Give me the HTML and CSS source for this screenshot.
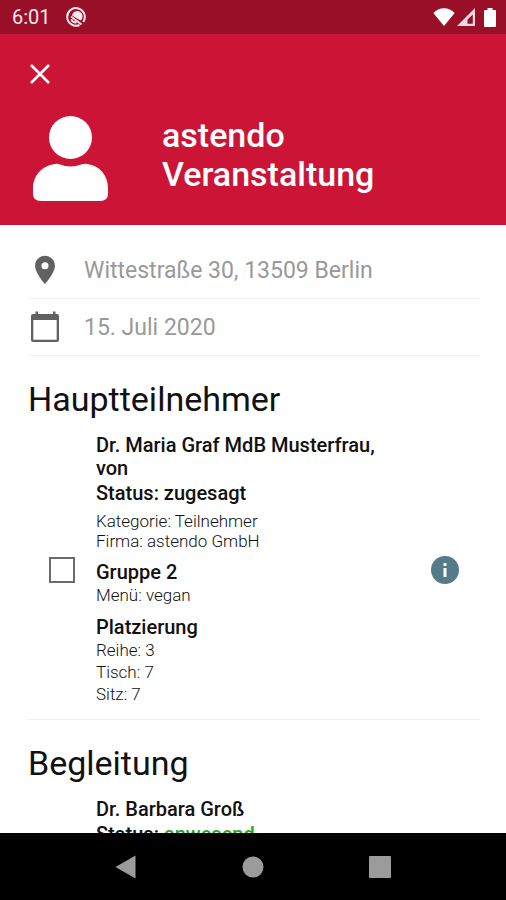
FILE: index.html
```html
<!DOCTYPE html>
<html lang="de">

<head>
    <meta charset="UTF-8">
    <meta name="viewport" content="width=device-width, initial-scale=1.0">
    <title>astendo Veranstaltung</title>
    <link rel="stylesheet" href="styles.css">
</head>

<body>
    <div class="status-bar">
        <span class="time">6:01</span>
        <svg class="status-app" width="20" height="20" viewBox="0 0 20 20" fill="none" stroke="currentColor">
            <path d="M13.500 18A8.800 8.800 0 1 1 17.200 15" stroke-width="2" />
            <path d="M6 8.500A5.300 5.300 0 1 1 14.500 13.500Z" fill="currentColor" stroke="none" />
            <path d="M5 9.500L15.500 17.500M5.200 12.300A5.400 5.400 0 0 0 10.500 15.500" stroke-width="1.800" />
        </svg>
        <div class="status-icons">
            <svg width="22" height="18" viewBox="0 0 22 18" fill="currentColor">
                <path d="M11 18L0.300 5C3 2 7 0.300 11 0.300S19 2 21.700 5Z" />
            </svg>
            <svg width="18" height="18" viewBox="0 0 18 18" fill="currentColor">
                <path fill-rule="evenodd" d="M18 0V18H0ZM15.800 6.500L10.500 11.500V15.800H15.800Z" opacity="0.850" />
            </svg>
            <svg class="battery" width="12" height="19" viewBox="0 0 12 19" fill="currentColor">
                <path d="M3.500 0H8.500V2H11Q12 2 12 3V18Q12 19 11 19H1Q0 19 0 18V3Q0 2 1 2H3.500Z" />
            </svg>
        </div>
    </div>

    <header class="header">
        <button class="close" aria-label="Schließen">
            <svg width="20" height="20" viewBox="0 0 20 20" fill="none" stroke="currentColor" stroke-width="2.600">
                <path d="M1 1L19 19M19 1L1 19" />
            </svg>
        </button>
        <div class="event">
            <svg class="avatar" width="76" height="86" viewBox="0 0 76 86" fill="currentColor">
                <circle cx="37.500" cy="21.500" r="21.500" />
                <path d="M22 48Q24 47.500 27 48.500Q37.500 52.500 48 48.500Q51 47.500 54 48C67 49.500 75 60 75 72V78Q75 85 67 85H8Q0 85 0 78V72C0 60 9 49.500 22 48Z" />
            </svg>
            <h1>astendo Veranstaltung</h1>
        </div>
    </header>

    <main class="content">
        <div class="info-row">
            <svg width="34" height="34" viewBox="0 0 24 24" fill="currentColor">
                <path d="M12 2C8.130 2 5 5.130 5 9c0 5.250 7 13 7 13s7-7.750 7-13c0-3.870-3.130-7-7-7zm0 9.500a2.500 2.500 0 0 1 0-5 2.500 2.500 0 0 1 0 5z" />
            </svg>
            <span>Wittestraße 30, 13509 Berlin</span>
        </div>
        <div class="info-row">
            <svg width="34" height="34" viewBox="0 0 34 34" fill="currentColor">
                <path fill-rule="evenodd" d="M7.500 1.500H10V4H25V1.500H27.500V4H29Q31 4 31 6V30Q31 32 29 32H5Q3 32 3 30V6Q3 4 5 4H7.500ZM5.300 10V29.700H28.700V10Z" />
            </svg>
            <span>15. Juli 2020</span>
        </div>

        <section class="group">
            <h2>Hauptteilnehmer</h2>
            <div class="participant">
                <input type="checkbox" aria-label="Dr. Maria Graf MdB Musterfrau, von">
                <div class="details">
                    <h3>Dr. Maria Graf MdB Musterfrau, von</h3>
                    <p class="status">Status: zugesagt</p>
                    <p class="meta">Kategorie: Teilnehmer<br>Firma: astendo GmbH</p>
                    <h3>Gruppe 2</h3>
                    <p>Menü: vegan</p>
                    <h3 class="placement">Platzierung</h3>
                    <p>Reihe: 3</p>
                    <p>Tisch: 7</p>
                    <p>Sitz: 7</p>
                </div>
                <button class="info" aria-label="Info">
                    <svg width="28" height="28" viewBox="0 0 28 28">
                        <circle cx="14" cy="14" r="14" fill="#557b8b" />
                        <path d="M12.500 7H15.500V10H12.500ZM12.500 12H15.500V21H12.500Z" fill="#fff" />
                    </svg>
                </button>
            </div>
        </section>

        <section class="group">
            <h2>Begleitung</h2>
            <div class="participant">
                <div class="details">
                    <h3>Dr. Barbara Groß</h3>
                    <p class="status">Status: <span class="present">anwesend</span></p>
                </div>
            </div>
        </section>
    </main>

    <nav class="nav-bar">
        <button aria-label="Zurück">
            <svg width="22" height="24" viewBox="0 0 22 24" fill="currentColor">
                <path d="M20.500 0.500V23.500L0.500 12Z" />
            </svg>
        </button>
        <button aria-label="Startseite">
            <svg width="22" height="22" viewBox="0 0 22 22" fill="currentColor">
                <circle cx="11" cy="11" r="10.500" />
            </svg>
        </button>
        <button aria-label="Übersicht">
            <svg width="22" height="22" viewBox="0 0 22 22" fill="currentColor">
                <rect width="22" height="22" rx="1" />
            </svg>
        </button>
    </nav>
</body>

</html>
```
FILE: styles.css
```css
* {
    margin: 0;
    padding: 0;
    box-sizing: border-box;
}

body {
    font-family: Roboto, sans-serif;
    background: #fff;
    color: #111;
    height: 100vh;
    display: flex;
    flex-direction: column;
}

svg {
    display: block;
    flex-shrink: 0;
}

button {
    background: none;
    border: none;
    cursor: pointer;
}

.status-bar {
    flex-shrink: 0;
    display: flex;
    align-items: center;
    height: 34px;
    padding: 0 10px 0 12px;
    background: #9a0f28;
    color: #fbe9ec;
}

.time {
    font-size: 20px;
    margin-right: 15px;
}

.status-icons {
    display: flex;
    align-items: center;
    gap: 2px;
    margin-left: auto;
    color: #fff;
}

.battery {
    margin-left: 7px;
}

.header {
    flex-shrink: 0;
    padding: 30px 28px 23px;
    background: #cc1436;
    color: #fff;
}

.close {
    display: block;
    padding: 0 2px;
    color: #fff;
}

.event {
    display: flex;
    align-items: flex-start;
    margin-top: 32px;
    padding-left: 5px;
    gap: 53px;
}

h1 {
    max-width: 260px;
    font-size: 34px;
    font-weight: 500;
    line-height: 39px;
}

.content {
    flex: 1;
    min-height: 0;
    overflow: hidden;
    padding: 17px 26px 0 28px;
}

.info-row {
    display: flex;
    align-items: center;
    gap: 22px;
    height: 57px;
    border-bottom: 1px solid #f1f1f1;
    color: #616161;
    font-size: 23px;
}

.info-row span {
    color: #999;
}

.group {
    padding: 21px 0 14px;
    border-bottom: 1px solid #f1f1f1;
}

h2 {
    font-size: 34px;
    font-weight: 400;
    line-height: 44px;
    margin-bottom: 13px;
}

.participant {
    display: flex;
    align-items: center;
    padding: 0 21px 0 68px;
}

.participant input {
    appearance: none;
    flex-shrink: 0;
    width: 26px;
    height: 26px;
    margin-left: -47px;
    margin-right: 21px;
    border: 2px solid #6b6b6b;
}

.participant input:checked {
    background: #557b8b;
}

.details {
    flex: 1;
    font-size: 17px;
    font-weight: 300;
    line-height: 22px;
    color: #111;
}

h3,
.status {
    max-width: 300px;
    font-size: 20px;
    font-weight: 500;
    line-height: 23px;
    color: #111;
}

.status {
    margin-top: 2px;
}

.meta {
    margin: 6px 0 10px;
    line-height: 20px;
}

.placement {
    margin-top: 10px;
}

.present {
    color: #2aa52a;
}

.nav-bar {
    flex-shrink: 0;
    display: flex;
    align-items: center;
    justify-content: space-around;
    height: 67px;
    padding: 0 62px;
    background: #000;
}

.nav-bar button {
    color: #9b9b9b;
}
```
